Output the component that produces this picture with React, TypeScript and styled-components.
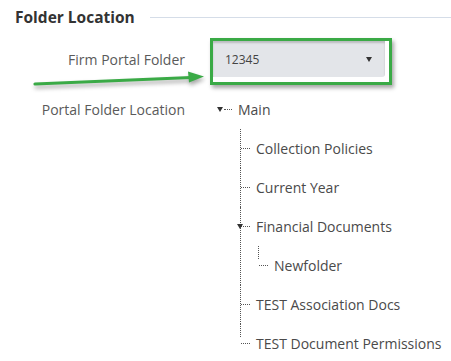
import styled, { createGlobalStyle } from "styled-components";

const GlobalStyle = createGlobalStyle`
  html, body {
    margin: 0;
    background: #fff;
  }
  body {
    font-family: "Open Sans", "Liberation Sans", sans-serif;
  }
`;

type Folder = {
  name: string;
  open?: boolean;
  children?: Folder[];
};

const folders: Folder[] = [
  {
    name: "Main",
    open: true,
    children: [
      { name: "Collection Policies" },
      { name: "Current Year" },
      { name: "Financial Documents", open: true, children: [{ name: "Newfolder" }] },
      { name: "TEST Association Docs" },
      { name: "TEST Document Permissions" },
    ],
  },
];

const FolderNode = ({ folder, root, last }: { folder: Folder; root?: boolean; last?: boolean }) => (
  <Node $root={root} $last={last}>
    <NodeRow $root={root}>
      {folder.open && <Toggle $root={root} />}
      {folder.name}
    </NodeRow>
    {folder.children && (
      <NodeList $nested>
        {folder.children.map((child, i) => (
          <FolderNode key={child.name} folder={child} last={i === folder.children!.length - 1} />
        ))}
      </NodeList>
    )}
  </Node>
);

const Arrow = () => (
  <ArrowSvg width="451" height="361" viewBox="0 0 451 361">
    <path d="M35 84 L191 77.5" stroke="#3aaa46" strokeWidth="3.2" strokeLinecap="round" fill="none" />
    <path d="M188 71.5 L204 76.5 L189 82.5 Z" fill="#3aaa46" />
  </ArrowSvg>
);

const App = () => {
  return (
    <Page>
      <GlobalStyle />
      <Header>
        <Title>Folder Location</Title>
        <Rule />
      </Header>
      <Form>
        <Label $tall>Firm Portal Folder</Label>
        <Highlight>
          <Select>
            <span>12345</span>
            <Caret />
          </Select>
        </Highlight>
        <Label>Portal Folder Location</Label>
        <NodeList>
          {folders.map((f) => (
            <FolderNode key={f.name} folder={f} root />
          ))}
        </NodeList>
      </Form>
      <Arrow />
    </Page>
  );
};

const Page = styled.div`
  position: relative;
  width: 451px;
  height: 361px;
  overflow: hidden;
`;

const Header = styled.div`
  display: flex;
  align-items: center;
  gap: 15px;
  padding: 6px 0 0 15px;
  margin-bottom: 10px;
`;

const Title = styled.h2`
  margin: 0;
  font-size: 15.5px;
  line-height: 22px;
  font-weight: 700;
  color: #333;
  white-space: nowrap;
`;

const Rule = styled.div`
  flex: 1;
  height: 1px;
  background: #d5dde8;
`;

const Form = styled.div`
  display: grid;
  grid-template-columns: 185px 1fr;
  column-gap: 25px;
  row-gap: 5px;
  align-items: start;
`;

const Label = styled.div<{ $tall?: boolean }>`
  text-align: right;
  font-size: 14px;
  color: #5a5a5a;
  line-height: ${({ $tall }) => ($tall ? "44px" : "39px")};
`;

const Highlight = styled.div`
  width: 176px;
  height: 41px;
  border: 3px solid #3aaa46;
  box-shadow: 2px 3px 4px rgba(0, 0, 0, 0.35);
  background: #fff;
`;

const Select = styled.div`
  display: flex;
  align-items: center;
  justify-content: space-between;
  width: 172px;
  height: 36px;
  padding: 0 12px;
  box-sizing: border-box;
  background: #e3e5e9;
  border-radius: 0 0 3px 0;
  box-shadow: inset 0 2px 2px rgba(0, 0, 0, 0.18);
  font-size: 12px;
  color: #444;
`;

const Caret = styled.span`
  width: 0;
  height: 0;
  margin-right: 1px;
  border-left: 3.5px solid transparent;
  border-right: 3.5px solid transparent;
  border-top: 5px solid #333;
`;

const NodeList = styled.ul<{ $nested?: boolean }>`
  list-style: none;
  margin: 0 0 0 ${({ $nested }) => ($nested ? "18px" : "12px")};
  padding: 0;
`;

const Node = styled.li<{ $root?: boolean; $last?: boolean }>`
  position: relative;

  &::before {
    content: "";
    display: ${({ $root }) => ($root ? "none" : "block")};
    position: absolute;
    left: 0;
    top: 0;
    height: ${({ $last }) => ($last ? "13px" : "100%")};
    border-left: 1px dotted #555;
  }
`;

const NodeRow = styled.div<{ $root?: boolean }>`
  position: relative;
  height: 39px;
  display: flex;
  align-items: center;
  padding-left: 16px;
  font-size: 14px;
  color: #4a4a4a;
  white-space: nowrap;

  &::before {
    content: "";
    position: absolute;
    left: ${({ $root }) => ($root ? "2px" : "1px")};
    top: 19px;
    width: ${({ $root }) => ($root ? "8px" : "9px")};
    border-top: 1px dotted #555;
  }
`;

const Toggle = styled.span<{ $root?: boolean }>`
  position: absolute;
  left: ${({ $root }) => ($root ? "-5px" : "-3px")};
  top: 17px;
  width: 0;
  height: 0;
  border-left: 3px solid transparent;
  border-right: 3px solid transparent;
  border-top: 5px solid #333;
`;

const ArrowSvg = styled.svg`
  position: absolute;
  left: 0;
  top: 0;
  pointer-events: none;
  filter: drop-shadow(1px 3px 2px rgba(0, 0, 0, 0.35));
`;

export default App;
